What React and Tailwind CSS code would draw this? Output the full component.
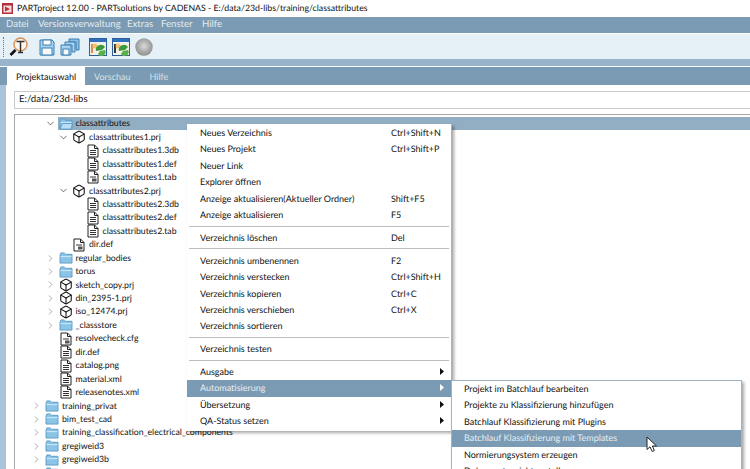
import React from "react";
import { ChevronDown, ChevronRight, Box } from "lucide-react";

const menuBar = [
  { label: "Datei", width: "w-[32px]" },
  { label: "Versionsverwaltung", width: "w-[89px]" },
  { label: "Extras", width: "w-[34px]" },
  { label: "Fenster", width: "w-[41px]" },
  { label: "Hilfe", width: "w-[30px]" },
];

const treeRows = [
  { level: 1, open: true, icon: "folderOpen", label: "classattributes", selected: true },
  { level: 2, open: true, icon: "cube", label: "classattributes1.prj" },
  { level: 3, icon: "file", label: "classattributes1.3db" },
  { level: 3, icon: "file", label: "classattributes1.def" },
  { level: 3, icon: "fileDark", label: "classattributes1.tab" },
  { level: 2, open: true, icon: "cube", label: "classattributes2.prj" },
  { level: 3, icon: "file", label: "classattributes2.3db" },
  { level: 3, icon: "file", label: "classattributes2.def" },
  { level: 3, icon: "file", label: "classattributes2.tab" },
  { level: 2, icon: "fileDark", label: "dir.def" },
  { level: 1, closed: true, icon: "folder", label: "regular_bodies" },
  { level: 1, closed: true, icon: "folder", label: "torus" },
  { level: 1, closed: true, icon: "cube", label: "sketch_copy.prj" },
  { level: 1, closed: true, icon: "cube", label: "din_2395-1.prj" },
  { level: 1, closed: true, icon: "cube", label: "iso_12474.prj" },
  { level: 1, closed: true, icon: "folder", label: "_classstore" },
  { level: 1, icon: "fileDark", label: "resolvecheck.cfg" },
  { level: 1, icon: "file", label: "dir.def" },
  { level: 1, icon: "file", label: "catalog.png" },
  { level: 1, icon: "file", label: "material.xml" },
  { level: 1, icon: "file", label: "releasenotes.xml" },
  { level: 0, closed: true, icon: "folder", label: "training_privat" },
  { level: 0, closed: true, icon: "folder", label: "bim_test_cad" },
  { level: 0, closed: true, icon: "folder", label: "training_classification_electrical_components" },
  { level: 0, closed: true, icon: "folder", label: "gregiweid3" },
  { level: 0, closed: true, icon: "folder", label: "gregiweid3b" },
  { level: 0, closed: true, icon: "folder", label: "hansm_files", red: true },
];

const levelPad = ["pl-[14px]", "pl-[27.5px]", "pl-[41px]", "pl-[54.5px]"];

const contextMenu = [
  { label: "Neues Verzeichnis", keys: "Ctrl+Shift+N" },
  { label: "Neues Projekt", keys: "Ctrl+Shift+P" },
  { label: "Neuer Link" },
  { label: "Explorer öffnen" },
  { label: "Anzeige aktualisieren(Aktueller Ordner)", keys: "Shift+F5" },
  { label: "Anzeige aktualisieren", keys: "F5" },
  { separator: true },
  { label: "Verzeichnis löschen", keys: "Del" },
  { separator: true },
  { label: "Verzeichnis umbenennen", keys: "F2" },
  { label: "Verzeichnis verstecken", keys: "Ctrl+Shift+H" },
  { label: "Verzeichnis kopieren", keys: "Ctrl+C" },
  { label: "Verzeichnis verschieben", keys: "Ctrl+X" },
  { label: "Verzeichnis sortieren" },
  { separator: true },
  { label: "Verzeichnis testen" },
  { separator: true },
  { label: "Ausgabe", sub: true },
  { label: "Automatisierung", sub: true, active: true },
  { label: "Übersetzung", sub: true },
  { label: "QA-Status setzen", sub: true },
];

const subMenu = [
  { label: "Projekt im Batchlauf bearbeiten" },
  { label: "Projekte zu Klassifizierung hinzufügen" },
  { label: "Batchlauf Klassifizierung mit Plugins" },
  { label: "Batchlauf Klassifizierung mit Templates", active: true },
  { label: "Normierungsystem erzeugen" },
  { label: "Dokumentansicht erstellen" },
];

const FolderIcon = ({ open }) => (
  <svg width="14" height="12" viewBox="0 0 15 13" className="shrink-0">
    <path d="M1 3.5 V12 H14 V2.5 H7 L5.5 1 H2 Z" fill="#8cc4e8" stroke="#5a9ac6" strokeWidth="1" />
    <path d="M1.5 5 H13.5" stroke="#d3ecfa" strokeWidth="1" />
    {open && <path d="M3.5 6 H14.5 L13 12 H1 Z" fill="#b9def4" stroke="#5a9ac6" strokeWidth="1" />}
  </svg>
);

const FileIcon = ({ dark }) => (
  <svg width="12" height="14" viewBox="0 0 12 14" className="shrink-0">
    <path d="M1 1 H7.5 L11 4.5 V13 H1 Z" fill="#fff" stroke="#222" strokeWidth="1" />
    <path d="M7.5 1 V4.5 H11" fill="none" stroke="#222" strokeWidth="1" />
    {dark ? (
      <>
        <path d="M3 7 H9" stroke="#333" strokeWidth="1" />
        <rect x="5" y="8.5" width="4.5" height="3" fill="#555" />
      </>
    ) : (
      <path d="M3 6.5 H9 M3 8.5 H9 M3 10.5 H9" stroke="#333" strokeWidth="1" />
    )}
  </svg>
);

const RowIcon = ({ type }) => {
  if (type === "folder") return <FolderIcon />;
  if (type === "folderOpen") return <FolderIcon open />;
  if (type === "cube") return <Box size={14} strokeWidth={1.8} color="#111" className="shrink-0" />;
  return <FileIcon dark={type === "fileDark"} />;
};

const TreeRow = ({ row }) => (
  <div className={`flex h-[13.44px] items-center ${levelPad[row.level]}`}>
    <span className="flex w-[15px] shrink-0 justify-center">
      {row.open && <ChevronDown size={11} strokeWidth={1.5} color="#333" />}
      {row.closed && <ChevronRight size={11} strokeWidth={1.5} color="#888" />}
    </span>
    <span className={`flex h-[13.44px] flex-1 items-center gap-[3px] pl-px ${row.selected ? "bg-[#92aec3]" : ""}`}>
      <span className="flex w-[14px] shrink-0 justify-center">
        <RowIcon type={row.icon} />
      </span>
      <span className={`whitespace-nowrap ${row.red ? "text-[#b5403a]" : "text-[#111]"}`}>{row.label}</span>
    </span>
  </div>
);

const MenuItem = ({ item }) => {
  if (item.separator) return <div className="mx-[2px] mb-[3.3px] mt-[2px] h-px bg-[#bdbdbd]" />;
  return (
    <div className={`flex h-[16.45px] items-center pb-[1.5px] pl-[13px] pr-[6px] ${item.active ? "bg-[#7a9bb3] text-[#e8eef3]" : "text-[#111]"}`}>
      <span className="w-[191px] whitespace-nowrap">{item.label}</span>
      <span className="flex-1 whitespace-nowrap">{item.keys}</span>
      {item.sub && (
        <svg width="4" height="7" viewBox="0 0 4 7" className="mr-[1px]">
          <path d="M0 0 L4 3.5 L0 7 Z" fill={item.active ? "#fff" : "#111"} />
        </svg>
      )}
    </div>
  );
};

const SearchToolIcon = () => (
  <svg width="20" height="20" viewBox="0 0 20 20">
    <circle cx="11.5" cy="7.5" r="6.5" fill="#fdf6ee" stroke="#d98f52" strokeWidth="1.4" />
    <path d="M7.5 4.5 H15.5 M11.5 4.5 V15 M9 15.5 H14" stroke="#333" strokeWidth="1.5" />
    <path d="M6.5 13 L1.5 18" stroke="#111" strokeWidth="2.6" />
  </svg>
);

const SaveIcon = () => (
  <svg width="16" height="18" viewBox="0 0 16 18">
    <path d="M1 2 H13 L15 4 V17 H1 Z" fill="#a9d4f0" stroke="#3a7fb0" />
    <rect x="4" y="2" width="8" height="5" fill="#fff" stroke="#3a7fb0" />
    <rect x="3" y="10" width="10" height="7" fill="#f4f9fc" stroke="#3a7fb0" />
  </svg>
);

const SaveAllIcon = () => (
  <svg width="20" height="18" viewBox="0 0 20 18">
    <path d="M9 1 H19 V12 H16 V4 H9 Z" fill="#8fbfe0" stroke="#3a7fb0" />
    <path d="M5 4 H15 V14 H12 V7 H5 Z" fill="#a9d4f0" stroke="#3a7fb0" />
    <path d="M1 7 H11 V17 H1 Z" fill="#a9d4f0" stroke="#3a7fb0" />
    <rect x="3" y="11" width="6" height="6" fill="#f4f9fc" stroke="#3a7fb0" />
  </svg>
);

const WindowIcon = ({ dark }) => (
  <svg width="18" height="18" viewBox="0 0 18 18">
    <rect x="0.5" y="0.5" width="17" height="17" fill="#f3f1e6" stroke="#2f5f9a" />
    <rect x="1" y="1" width="16" height="3" fill="#2f6fc0" />
    <path d="M3 6 L3 15" stroke={dark ? "#333" : "#d98f52"} strokeWidth="2" />
    <circle cx="6" cy="8" r="2.5" fill="#f0c270" />
    <path d="M7 13 A5 5 0 0 1 16 9 L13 12 Z" fill="#3c9a3c" />
    <path d="M9 16 A4 4 0 0 0 16 12 L11 13 Z" fill="#59b04a" />
  </svg>
);

const DiscIcon = () => (
  <svg width="18" height="18" viewBox="0 0 18 18">
    <defs>
      <radialGradient id="disc" cx="50%" cy="45%" r="55%">
        <stop offset="0%" stopColor="#d9d9d9" />
        <stop offset="100%" stopColor="#8e8e8e" />
      </radialGradient>
    </defs>
    <circle cx="9" cy="9" r="8.7" fill="url(#disc)" />
  </svg>
);

const Cursor = () => (
  <svg width="13" height="17" viewBox="0 0 13 17">
    <path d="M1 1 V13.5 L4 10.8 L6.2 15.5 L8.4 14.5 L6.3 10 H10.5 Z" fill="#fff" stroke="#222" strokeWidth="1" />
  </svg>
);

export default function App() {
  return (
    <div className="relative flex h-[469px] w-[750px] flex-col overflow-hidden bg-white font-['Lato',sans-serif] text-[9px] leading-none [text-rendering:geometricPrecision]">
      {/* title bar */}
      <div className="flex h-[17px] shrink-0 items-center gap-[4px] bg-white pl-[2px] text-[8.75px] text-[#111]">
        <svg width="11" height="11" viewBox="0 0 11 11">
          <rect width="11" height="11" fill="#b5303a" />
          <rect x="1.5" y="2.5" width="8" height="7" fill="#f3dcdc" />
          <path d="M3 3.5 L8 6 L3 8.5 Z" fill="#b5303a" />
        </svg>
        <span className="whitespace-nowrap">PARTproject 12.00 - PARTsolutions by CADENAS - E:/data/23d-libs/training/classattributes</span>
      </div>

      {/* menu bar */}
      <div className="flex h-[16px] shrink-0 items-center bg-[#7a9bb3] pl-[6px] text-[9.6px] text-[#e4ebf0]">
        {menuBar.map((m) => (
          <span key={m.label} className={m.width}>{m.label}</span>
        ))}
      </div>
      <div className="h-px shrink-0 bg-white" />

      {/* toolbar */}
      <div className="flex h-[25px] shrink-0 items-center bg-[#e6f0f7]">
        <div className="ml-[3px] mr-[4px] h-[20px] border-l border-dotted border-[#777]" />
        <div className="flex w-[22px] justify-center"><SearchToolIcon /></div>
        <div className="ml-[8px] flex w-[18px] justify-center"><SaveIcon /></div>
        <div className="ml-[4px] flex w-[20px] justify-center"><SaveAllIcon /></div>
        <div className="ml-[8px] flex w-[19px] justify-center"><WindowIcon /></div>
        <div className="ml-[4px] flex w-[19px] justify-center"><WindowIcon dark /></div>
        <div className="ml-[4px] flex w-[19px] justify-center"><DiscIcon /></div>
      </div>

      <div className="h-[7px] shrink-0 bg-[#98b4cb]" />
      <div className="h-px shrink-0 bg-white" />

      {/* tabs */}
      <div className="flex h-[18px] shrink-0 bg-[#7a9bb3] pl-[7px] text-[#d7e1e9]">
        <div className="flex w-[78px] items-center justify-center bg-white text-[#111]">Projektauswahl</div>
        <div className="ml-[9px] flex items-center">Vorschau</div>
        <div className="ml-[19px] flex items-center">Hilfe</div>
      </div>

      {/* panel */}
      <div className="flex min-h-0 flex-1 bg-[#a9c3da] pl-[6px]">
        <div className="flex min-w-0 flex-1 flex-col bg-white pl-[8px]">
          <div className="mt-[6px] flex h-[18px] shrink-0 items-center border border-r-0 border-[#c9c9c9] pl-[4px] text-[9.6px] text-[#111]">
            E:/data/23d-libs
          </div>
          <div className="mt-[5px] min-h-0 flex-1 overflow-hidden border-l border-t border-[#a8a8a8] pt-[2px] text-[8.7px]">
            {treeRows.map((row, i) => (
              <TreeRow key={i} row={row} />
            ))}
          </div>
        </div>
      </div>

      {/* context menu */}
      <div className="absolute left-[187px] top-[124px] w-[265px] border-r border-[#9fb5c6] bg-white py-px shadow-[2px_2px_3px_rgba(0,0,0,0.35)]">
        {contextMenu.map((item, i) => (
          <MenuItem key={i} item={item} />
        ))}
      </div>

      {/* sub menu */}
      <div className="absolute left-[451px] top-[380px] w-[291px] border-l border-r border-t border-[#9fb5c6] bg-white shadow-[2px_2px_3px_rgba(0,0,0,0.35)]">
        {subMenu.map((item) => (
          <div
            key={item.label}
            className={`flex h-[16.45px] items-center pb-[1.5px] pl-[12px] ${item.active ? "bg-[#7a9bb3] text-[#e8eef3]" : "text-[#111]"}`}
          >
            <span className="whitespace-nowrap">{item.label}</span>
          </div>
        ))}
      </div>

      {/* mouse cursor */}
      <div className="absolute left-[646px] top-[436px]">
        <Cursor />
      </div>
    </div>
  );
}
